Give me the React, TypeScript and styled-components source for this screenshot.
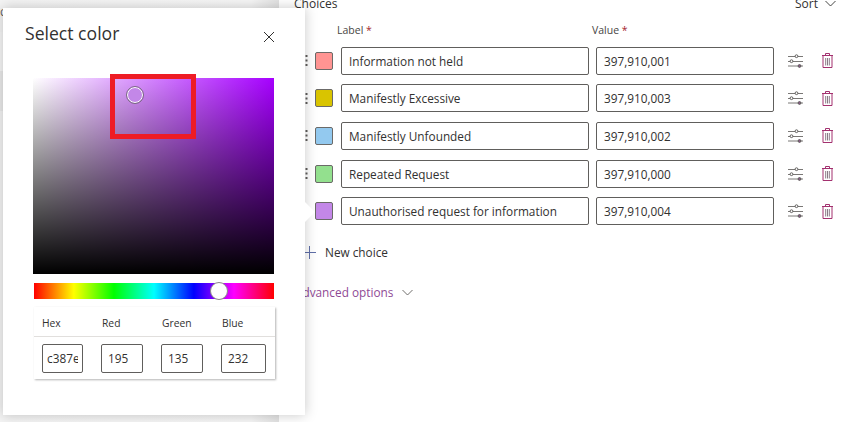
import React from 'react';
import styled, { createGlobalStyle } from 'styled-components';

const Global = createGlobalStyle`
  html, body { margin: 0; padding: 0; background: #fff; }
  body { font-family: "Open Sans", "Noto Sans", "Liberation Sans", sans-serif; }
`;

const Page = styled.div`
  position: relative;
  display: flex;
  width: 855px;
  height: 422px;
  overflow: hidden;
  background: #fff;
  color: #323130;
`;

const BackPane = styled.div`
  flex: 0 0 279px;
  display: flex;
  flex-direction: column;
  background: linear-gradient(to right, #f4f4f4 0, #f6f6f6 90%, #e2e2e2 100%);
`;

const BackRow = styled.div<{ $h: number; $bg: string }>`
  height: ${(p) => p.$h}px;
  background: ${(p) => p.$bg};
  font-size: 12px;
  line-height: 24px;
  overflow: hidden;
  color: #605e5c;
`;

const Main = styled.div`
  flex: 1;
  padding-left: 15px;
  margin-top: -6px;
`;

const Head = styled.div`
  display: flex;
  justify-content: space-between;
  align-items: center;
  height: 18px;
  font-size: 12px;
  padding-right: 19px;
`;

const Sort = styled.div`
  display: flex;
  align-items: center;
  gap: 7px;
`;

const Labels = styled.div`
  display: flex;
  margin: 11px 0 0 43px;
  height: 23.5px;
  font-size: 10.5px;
  color: #484644;
`;

const LabelCell = styled.div<{ $w: number }>`
  width: ${(p) => p.$w}px;
  & b { color: #a4262c; font-weight: 400; }
`;

const Rows = styled.div`
  display: flex;
  flex-direction: column;
  gap: 9.7px;
`;

const Row = styled.div`
  display: flex;
  align-items: center;
  height: 28px;
`;

const Grip = styled.div`
  flex: 0 0 21px;
  display: flex;
  justify-content: flex-end;
  padding-right: 7px;
  box-sizing: border-box;
  & svg { display: block; }
`;

const Swatch = styled.div<{ $c: string }>`
  flex: 0 0 18px;
  height: 18px;
  box-sizing: border-box;
  border: 1px solid #6b6a68;
  border-radius: 2px;
  background: ${(p) => p.$c};
  margin-right: 8px;
`;

const Field = styled.div<{ $w: number }>`
  flex: 0 0 ${(p) => p.$w}px;
  height: 28px;
  box-sizing: border-box;
  border: 1px solid #605e5c;
  border-radius: 2px;
  padding-left: 7px;
  margin-right: 7px;
  font-size: 11.8px;
  line-height: 26px;
  white-space: nowrap;
  overflow: hidden;
`;

const IconSlot = styled.div<{ $w: number }>`
  flex: 0 0 ${(p) => p.$w}px;
  display: flex;
  justify-content: center;
`;

const NewChoice = styled.div`
  display: flex;
  align-items: center;
  gap: 9px;
  margin: 17px 0 0 9px;
  height: 20px;
  font-size: 11.8px;
`;

const Advanced = styled.div`
  display: flex;
  align-items: center;
  gap: 9px;
  margin: 20px 0 0 1px;
  height: 20px;
  font-size: 11.8px;
  color: #8f4a95;
  & svg { color: #605e5c; }
`;

const Dialog = styled.div`
  position: absolute;
  left: 3px;
  top: 8px;
  width: 302px;
  height: 407px;
  box-sizing: border-box;
  padding: 10px 30px 0 30px;
  background: #fff;
  box-shadow: 0 0 12px rgba(0, 0, 0, 0.22);

  &::after {
    content: '';
    position: absolute;
    right: -7px;
    top: 197px;
    width: 14px;
    height: 14px;
    background: #fff;
    transform: rotate(45deg);
  }
`;

const DialogHead = styled.div`
  display: flex;
  justify-content: space-between;
  align-items: center;
  height: 28px;
  margin: 0 -1px 32px -8px;
`;

const Title = styled.div`
  font-size: 17.6px;
  margin-top: 2px;
  color: #323130;
`;

const Close = styled.div`
  margin: 10px 1px 0 0;
  height: 12px;
  & svg { display: block; }
`;

const Picker = styled.div`
  position: relative;
  width: 241px;
  height: 196px;
  background:
    linear-gradient(to top, #000, rgba(0, 0, 0, 0)),
    linear-gradient(to right, #fff, #a600ff);
`;

const Cursor = styled.div`
  position: absolute;
  left: 94px;
  top: 9px;
  width: 16px;
  height: 16px;
  box-sizing: border-box;
  border-radius: 50%;
  border: 1.5px solid #fff;
  outline: 1px solid rgba(90, 90, 90, 0.7);
  background: #c387e8;
`;

const RedBox = styled.div`
  position: absolute;
  left: 77px;
  top: -4px;
  width: 86px;
  height: 65px;
  box-sizing: border-box;
  border: 5px solid #ee1c25;
`;

const Hue = styled.div`
  position: relative;
  width: 240px;
  height: 16px;
  margin: 9px 0 8px 1px;
  background: linear-gradient(
    to right,
    #f00 0%,
    #ff0 16.6%,
    #0f0 33.3%,
    #0ff 50%,
    #00f 66.6%,
    #f0f 83.3%,
    #f00 100%
  );
`;

const HueThumb = styled.div`
  position: absolute;
  left: 176px;
  top: -1px;
  width: 18px;
  height: 18px;
  box-sizing: border-box;
  border-radius: 50%;
  background: #fff;
  border: 1px solid #8a8886;
`;

const Table = styled.div`
  width: 241px;
  margin-left: 1px;
  box-shadow: 1px 1px 2px rgba(0, 0, 0, 0.3);
`;

const TableHead = styled.div`
  display: grid;
  grid-template-columns: repeat(4, 60px);
  height: 27px;
  padding: 2px 0 0 8px;
  align-items: center;
  border-bottom: 1px solid #e1dfdd;
  font-size: 10.3px;
`;

const TableBody = styled.div`
  display: flex;
  height: 42px;
  padding-left: 8px;
  align-items: center;
`;

const Cell = styled.div<{ $w: number; $mr: number; $pl: number }>`
  width: ${(p) => p.$w}px;
  margin-right: ${(p) => p.$mr}px;
  height: 29px;
  box-sizing: border-box;
  border: 1px solid #605e5c;
  border-radius: 2px;
  padding: 0 4px 0 ${(p) => p.$pl}px;
  font-size: 11.8px;
  line-height: 27px;
`;

const CellText = styled.div`
  overflow: hidden;
  white-space: nowrap;
`;

const Chevron = () => (
  <svg width="11" height="7" viewBox="0 0 11 7" fill="none" stroke="currentColor" strokeWidth="0.9">
    <path d="M0.5 1 L5.5 6 L10.5 1" />
  </svg>
);

const GripIcon = () => (
  <svg width="3" height="11" viewBox="0 0 3 11" fill="#605e5c">
    <rect x="0.5" y="0" width="2" height="2" />
    <rect x="0.5" y="4.5" width="2" height="2" />
    <rect x="0.5" y="9" width="2" height="2" />
  </svg>
);

const SlidersIcon = () => (
  <svg width="15" height="14" viewBox="0 0 15 14" fill="none" stroke="#605e5c" strokeWidth="1">
    <path d="M0 2.5 H15 M0 7.5 H15 M0 12 H15" stroke="#7a7876" />
    <circle cx="8.5" cy="2.2" r="1.4" fill="#fff" />
    <circle cx="3.5" cy="7.2" r="1.4" fill="#fff" />
    <circle cx="11.5" cy="12" r="1.4" fill="#8a5a8a" />
  </svg>
);

const TrashIcon = () => (
  <svg width="11" height="15" viewBox="0 0 11 15" fill="none" stroke="#a3316f" strokeWidth="1">
    <path d="M0 2.5 H11 M3.5 2.5 V0.5 H7.5 V2.5 M1 2.5 V14.5 H10 V2.5" />
    <path d="M3.7 5 V12.5 M5.5 5 V12.5 M7.3 5 V12.5" stroke="#8a7a86" />
  </svg>
);

const choices = [
  { label: 'Information not held', value: '397,910,001', color: '#ff9492', grip: true },
  { label: 'Manifestly Excessive', value: '397,910,003', color: '#d9c400', grip: true },
  { label: 'Manifestly Unfounded', value: '397,910,002', color: '#93c9ef', grip: true },
  { label: 'Repeated Request', value: '397,910,000', color: '#93e08e', grip: true },
  { label: 'Unauthorised request for information', value: '397,910,004', color: '#c387e8', grip: false },
];

const App: React.FC = () => {
  return (
    <Page>
      <Global />
      <BackPane>
        <BackRow $h={32} $bg="transparent">c</BackRow>
        <BackRow $h={39} $bg="#f7f7f7" />
        <BackRow $h={40} $bg="#ebebeb" />
      </BackPane>
      <Main>
        <Head>
          <span>Choices</span>
          <Sort>
            <span>Sort</span>
            <Chevron />
          </Sort>
        </Head>
        <Labels>
          <LabelCell $w={255}>
            Label <b>*</b>
          </LabelCell>
          <LabelCell $w={180}>
            Value <b>*</b>
          </LabelCell>
        </Labels>
        <Rows>
          {choices.map((c) => (
            <Row key={c.value}>
              <Grip>{c.grip && <GripIcon />}</Grip>
              <Swatch $c={c.color} />
              <Field $w={248}>{c.label}</Field>
              <Field $w={178}>{c.value}</Field>
              <IconSlot $w={28}>
                <SlidersIcon />
              </IconSlot>
              <IconSlot $w={36}>
                <TrashIcon />
              </IconSlot>
            </Row>
          ))}
        </Rows>
        <NewChoice>
          <svg width="13" height="13" viewBox="0 0 13 13" stroke="#5f6fa8" strokeWidth="1">
            <path d="M6.5 0 V13 M0 6.5 H13" />
          </svg>
          New choice
        </NewChoice>
        <Advanced>
          <span>Advanced options</span>
          <Chevron />
        </Advanced>
      </Main>
      <Dialog>
        <DialogHead>
          <Title>Select color</Title>
          <Close>
            <svg width="12" height="12" viewBox="0 0 12 12" stroke="#323130" strokeWidth="1">
              <path d="M1 1 L11 11 M11 1 L1 11" />
            </svg>
          </Close>
        </DialogHead>
        <Picker>
          <Cursor />
          <RedBox />
        </Picker>
        <Hue>
          <HueThumb />
        </Hue>
        <Table>
          <TableHead>
            <span>Hex</span>
            <span>Red</span>
            <span>Green</span>
            <span>Blue</span>
          </TableHead>
          <TableBody>
            <Cell $w={41} $mr={18} $pl={4}><CellText>c387e8</CellText></Cell>
            <Cell $w={42} $mr={18} $pl={6}><CellText>195</CellText></Cell>
            <Cell $w={42} $mr={18} $pl={6}><CellText>135</CellText></Cell>
            <Cell $w={45} $mr={0} $pl={6}><CellText>232</CellText></Cell>
          </TableBody>
        </Table>
      </Dialog>
    </Page>
  );
};

export default App;
